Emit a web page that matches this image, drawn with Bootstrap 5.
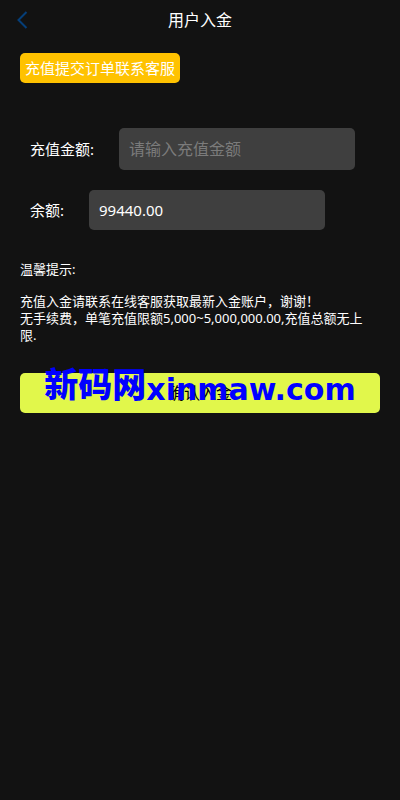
<!DOCTYPE html>
<html lang="zh-CN">
<head>
<meta charset="utf-8">
<meta name="viewport" content="width=device-width, initial-scale=1">
<title>用户入金</title>
<link href="https://cdn.jsdelivr.net/npm/bootstrap@5.3.0/dist/css/bootstrap.min.css" rel="stylesheet">
<style>
body { background: #121212; color: #fff; font-family: "Noto Sans", "Noto Sans CJK SC", sans-serif; font-size: 15px; line-height: 20px; }
.topbar { display: grid; grid-template-columns: 44px 1fr 44px; height: 40px; }
.topbar h1 { font-size: 16px; line-height: 20px; font-weight: 400; }
.topbar a { padding-left: 16px; line-height: 0; }
.page { padding: 13px 20px; }
.service { background: #ffc200; color: #fff; height: 30px; padding: 0 5px; border-radius: 5px; text-decoration: none; }
.fields { margin-top: 45px; padding-left: 10px; gap: 20px; }
.fields .row-field { gap: 25px; }
.fields .form-control { width: 236px; height: 40px; padding: 0 10px; border: 0; border-radius: 5px; background: #3f3f3f; color: #fff; font-size: 15px; }
.fields .form-control.amount { height: 42px; font-size: 16px; }
.fields .form-control::placeholder { color: #7b7b7b; }
.tips { margin-top: 31px; padding-right: 8px; font-size: 13px; line-height: 17px; }
.tips h2 { font-size: 13px; line-height: 17px; font-weight: 400; margin-bottom: 15px; }
.confirm { margin-top: 29px; height: 40px; }
.confirm .btn { background: #e1f74b; color: #000; font-size: 16px; border: 0; border-radius: 5px; padding: 0; }
.watermark { top: -2px; left: 0; right: 0; display: flex; justify-content: center; align-items: flex-start; color: #00f; font: 700 30px/38px "DejaVu Sans", sans-serif; pointer-events: none; white-space: nowrap; }
.watermark b { font: 900 34px/24px "Noto Sans CJK SC", sans-serif; }
</style>
<script src="https://cdn.jsdelivr.net/npm/bootstrap@5.3.0/dist/js/bootstrap.bundle.min.js" defer></script>
</head>
<body>
<header class="topbar align-items-center">
  <a href="#" aria-label="返回"><svg width="13" height="18" viewBox="0 0 13 18" fill="none" stroke="#053e78" stroke-width="2"><path d="M10.5 1 2.5 9l8 8"/></svg></a>
  <h1 class="m-0 text-center">用户入金</h1>
</header>
<main class="page">
  <a href="#" class="service d-inline-flex align-items-center">充值提交订单联系客服</a>
  <form>
    <div class="fields d-flex flex-column">
      <div class="row-field d-flex align-items-center">
        <label for="amount" class="flex-shrink-0">充值金额:</label>
        <input id="amount" class="form-control amount" type="text" placeholder="请输入充值金额">
      </div>
      <div class="row-field d-flex align-items-center">
        <label for="balance" class="flex-shrink-0">余额:</label>
        <input id="balance" class="form-control" type="text" value="99440.00" readonly>
      </div>
    </div>
    <section class="tips">
      <h2>温馨提示:</h2>
      <p class="m-0">充值入金请联系在线客服获取最新入金账户，谢谢！<br>无手续费，单笔充值限额5,000~5,000,000.00,充值总额无上限.</p>
    </section>
    <div class="confirm position-relative">
      <button type="button" class="btn w-100 h-100">确认入金</button>
      <div class="watermark position-absolute"><b>新码网</b><span>xinmaw.com</span></div>
    </div>
  </form>
</main>
</body>
</html>
